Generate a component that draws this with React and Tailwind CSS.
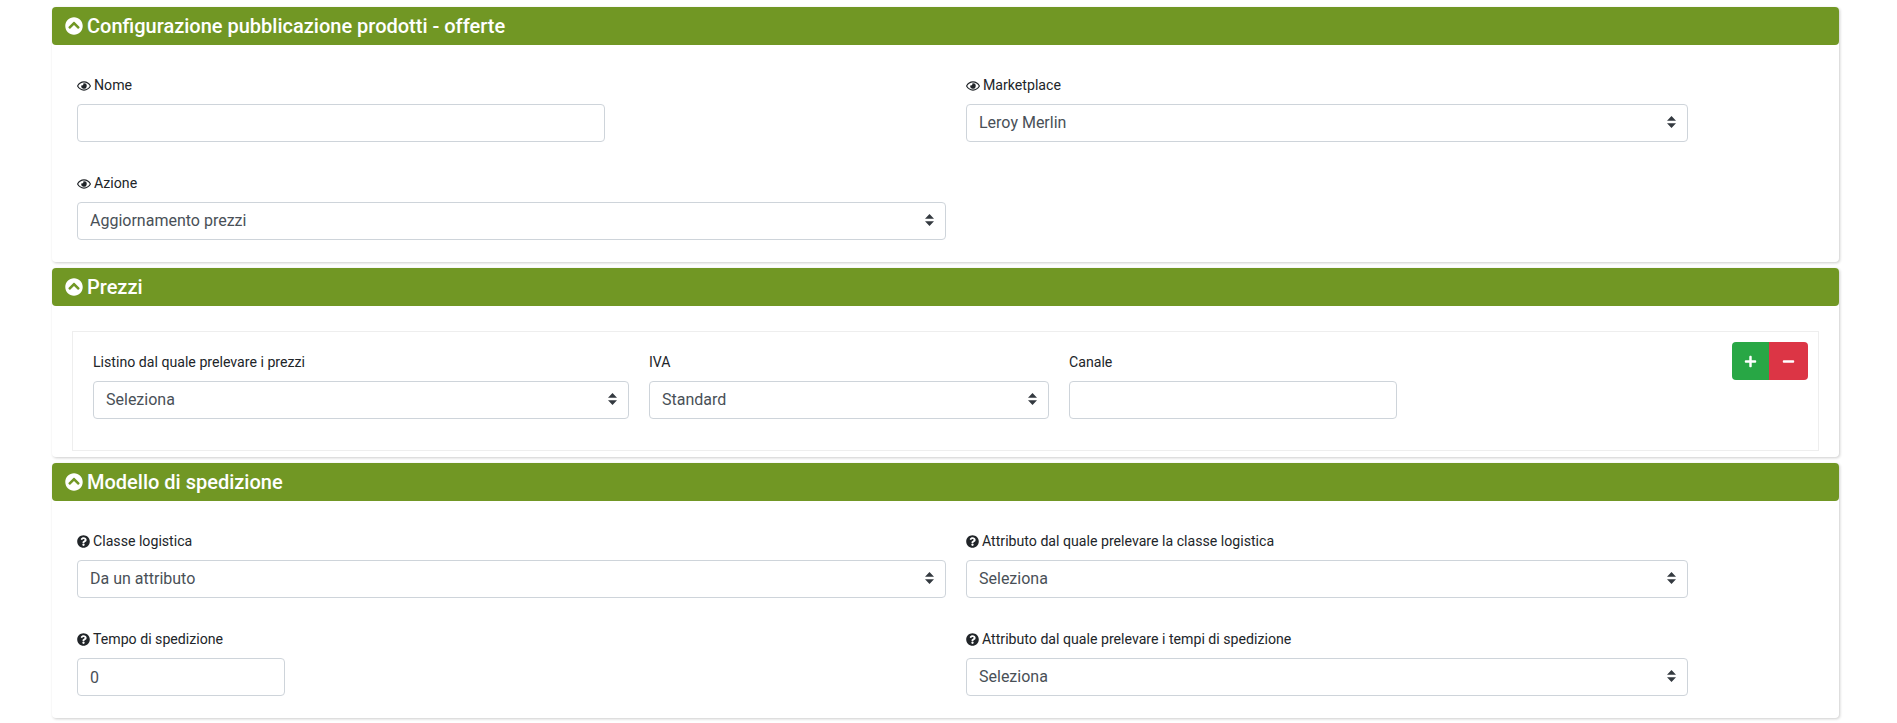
import { FaChevronCircleUp, FaRegEye, FaQuestionCircle, FaPlus, FaMinus } from "react-icons/fa";

function Label({ icon, children }) {
  return (
    <label className="flex items-center h-[21px] mb-2 text-[14.15px] leading-[21px] text-[#212529]">
      {icon === "eye" && <FaRegEye size={14} className="mr-[3px]" />}
      {icon === "help" && <FaQuestionCircle size={13} className="mr-[3px]" />}
      {children}
    </label>
  );
}

function TextInput({ className = "", defaultValue = "" }) {
  return (
    <input
      type="text"
      defaultValue={defaultValue}
      className={`block h-[38px] px-3 bg-white border border-[#ced4da] rounded text-base text-[#495057] outline-none ${className}`}
    />
  );
}

function Select({ value, className = "" }) {
  return (
    <div className={`relative h-[38px] ${className}`}>
      <select
        defaultValue={value}
        className="block w-full h-full pl-3 pr-7 appearance-none bg-white border border-[#ced4da] rounded text-base text-[#495057] outline-none"
      >
        <option>{value}</option>
      </select>
      <svg viewBox="0 0 4 5" preserveAspectRatio="none" className="absolute right-[12px] top-[12px] w-[9px] h-[12px] pointer-events-none fill-[#343a40]">
        <path d="M2 0L0 2h4zm0 5L0 3h4z" />
      </svg>
    </div>
  );
}

function Section({ title, children }) {
  return (
    <section className="bg-white rounded shadow-[1px_1px_3px_rgba(0,0,0,0.2)] mb-1.5">
      <h2 className="flex items-center h-[38px] pl-[13px] bg-[#719724] rounded text-white text-[20px] font-medium">
        <FaChevronCircleUp size={18} className="mr-[4px]" />
        {title}
      </h2>
      {children}
    </section>
  );
}

export default function App() {
  return (
    <div className="pt-[7px] pl-[52px] pr-[58px] bg-white min-h-[723px] font-['Roboto',sans-serif]">
      {/* Configurazione */}
      <Section title="Configurazione pubblicazione prodotti - offerte">
        <div className="grid grid-cols-[869px_722px] gap-x-[20px] gap-y-[31px] pt-[30px] pb-[22px] pl-[25px]">
          <div>
            <Label icon="eye">Nome</Label>
            <TextInput className="w-[528px]" />
          </div>
          <div>
            <Label icon="eye">Marketplace</Label>
            <Select value="Leroy Merlin" />
          </div>
          <div>
            <Label icon="eye">Azione</Label>
            <Select value="Aggiornamento prezzi" />
          </div>
        </div>
      </Section>

      {/* Prezzi */}
      <Section title="Prezzi">
        <div className="pt-[25px] pb-[6px] pl-[20px] pr-5">
          <div className="flex h-[120px] border border-[#eeeeee] pl-[20px] pt-[20px]">
            <div className="w-[536px] mr-[20px]">
              <Label>Listino dal quale prelevare i prezzi</Label>
              <Select value="Seleziona" />
            </div>
            <div className="w-[400px] mr-[20px]">
              <Label>IVA</Label>
              <Select value="Standard" />
            </div>
            <div className="w-[328px]">
              <Label>Canale</Label>
              <TextInput className="w-full" />
            </div>
            <div className="ml-auto mr-[10px] -mt-[10px] flex h-[38px]">
              <button className="flex items-center justify-center w-[37px] bg-[#28a745] rounded-l text-white">
                <FaPlus size={13} />
              </button>
              <button className="flex items-center justify-center w-[39px] bg-[#dc3545] rounded-r text-white">
                <FaMinus size={13} />
              </button>
            </div>
          </div>
        </div>
      </Section>

      {/* Modello di spedizione */}
      <Section title="Modello di spedizione">
        <div className="grid grid-cols-[869px_722px] gap-x-[20px] gap-y-[31px] pt-[30px] pb-[22px] pl-[25px]">
          <div>
            <Label icon="help">Classe logistica</Label>
            <Select value="Da un attributo" />
          </div>
          <div>
            <Label icon="help">Attributo dal quale prelevare la classe logistica</Label>
            <Select value="Seleziona" />
          </div>
          <div>
            <Label icon="help">Tempo di spedizione</Label>
            <TextInput className="w-[208px]" defaultValue="0" />
          </div>
          <div>
            <Label icon="help">Attributo dal quale prelevare i tempi di spedizione</Label>
            <Select value="Seleziona" />
          </div>
        </div>
      </Section>
    </div>
  );
}
